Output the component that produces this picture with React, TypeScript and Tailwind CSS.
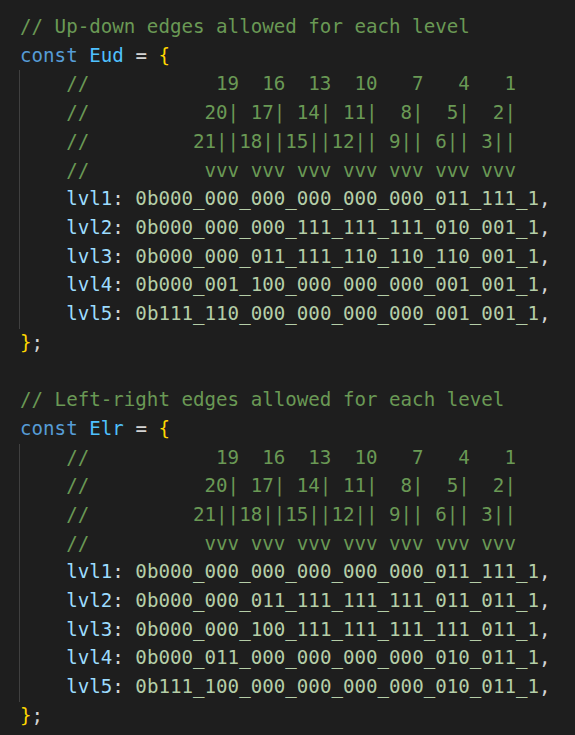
const headerRows = [
  "//           19  16  13  10   7   4   1",
  "//          20| 17| 14| 11|  8|  5|  2|",
  "//         21||18||15||12|| 9|| 6|| 3||",
  "//          vvv vvv vvv vvv vvv vvv vvv",
];

const blocks = [
  {
    comment: "// Up-down edges allowed for each level",
    name: "Eud",
    levels: [
      "0b000_000_000_000_000_000_011_111_1",
      "0b000_000_000_111_111_111_010_001_1",
      "0b000_000_011_111_110_110_110_001_1",
      "0b000_001_100_000_000_000_001_001_1",
      "0b111_110_000_000_000_000_001_001_1",
    ],
  },
  {
    comment: "// Left-right edges allowed for each level",
    name: "Elr",
    levels: [
      "0b000_000_000_000_000_000_011_111_1",
      "0b000_000_011_111_111_111_011_011_1",
      "0b000_000_100_111_111_111_111_011_1",
      "0b000_011_000_000_000_000_010_011_1",
      "0b111_100_000_000_000_000_010_011_1",
    ],
  },
];

function Block({ comment, name, levels }: (typeof blocks)[number]) {
  return (
    <div>
      <div className="text-[#6a9955]">{comment}</div>
      <div>
        <span className="text-[#569cd6]">const</span>{" "}
        <span className="text-[#4fc1ff]">{name}</span>{" "}
        <span className="text-[#d4d4d4]">=</span>{" "}
        <span className="text-[#ffd700]">{"{"}</span>
      </div>
      <div className="border-l border-[#404040] -ml-px">
        {headerRows.map((row) => (
          <div key={row} className="text-[#6a9955]">
            {"    " + row}
          </div>
        ))}
        {levels.map((value, i) => (
          <div key={i}>
            {"    "}
            <span className="text-[#9cdcfe]">{`lvl${i + 1}`}</span>
            <span className="text-[#d4d4d4]">: </span>
            <span className="text-[#b5cea8]">{value}</span>
            <span className="text-[#d4d4d4]">,</span>
          </div>
        ))}
      </div>
      <div>
        <span className="text-[#ffd700]">{"}"}</span>
        <span className="text-[#d4d4d4]">;</span>
      </div>
    </div>
  );
}

export default function App() {
  return (
    <div
      className="w-[575px] h-[735px] bg-[#1e1e1e] pt-[13px] pl-[20px] whitespace-pre text-[19.17px] leading-[28.7px] overflow-hidden"
      style={{ fontFamily: '"DejaVu Sans Mono", "Liberation Mono", monospace' }}
    >
      <Block {...blocks[0]} />
      <div>&nbsp;</div>
      <Block {...blocks[1]} />
    </div>
  );
}
